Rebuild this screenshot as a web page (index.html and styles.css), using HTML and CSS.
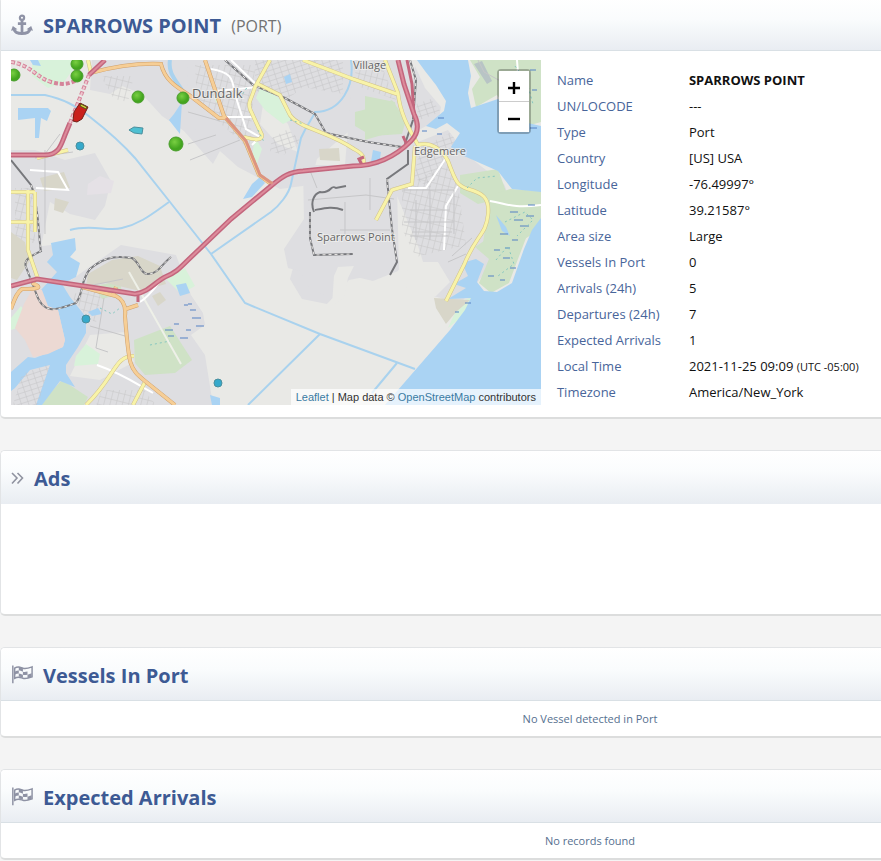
FILE: index.html
```
<!DOCTYPE html>
<html lang="en">
<head>
<meta charset="utf-8">
<title>Sparrows Point</title>
<link rel="stylesheet" href="styles.css">
</head>
<body>
<main class="page">
  <section class="card">
    <header class="card-head card-head-line">
      <svg class="icon" viewBox="0 0 24 24" fill="none" stroke="#8f93a6" stroke-width="3" aria-hidden="true">
        <circle cx="12" cy="3" r="2.300" stroke-width="2.400"/>
        <path d="M12 5V20M7.500 9.500h9M3 15c1 3.500 4.500 5.300 9 5.300s8-1.800 9-5.300"/>
        <path d="M0 17.300 2 12l5 3.500zM24 17.300 22 12l-5 3.500z" fill="#8f93a6" stroke="none"/>
      </svg>
      <h1>SPARROWS POINT</h1><span class="kind">(PORT)</span>
    </header>
    <div class="port">
      <div class="map">
        <svg class="map-art" viewBox="11 60 530 345" preserveAspectRatio="xMidYMid slice" role="img" aria-label="Map of Sparrows Point">
          <defs>
            <pattern id="grid" width="7" height="5" patternUnits="userSpaceOnUse" patternTransform="rotate(-18)"><path d="M0 0H7M0 0V5" stroke="#c3c3c6" stroke-width="1" fill="none"/></pattern>
            <pattern id="grid2" width="6" height="8" patternUnits="userSpaceOnUse" patternTransform="rotate(14)"><path d="M0 0H6M0 0V8" stroke="#c6c5c6" stroke-width="1" fill="none"/></pattern>
            <radialGradient id="ball" cx=".4" cy=".35"><stop offset="0" stop-color="#79cf42"/><stop offset="1" stop-color="#43a51f"/></radialGradient>
          </defs>
          <path fill="#e9e9e6" d="M11 60h530v345H11z"/>
          <g fill="#dedee1">
            <path d="M92 60h105l30 78-14 26-29-33-22-15-20-22-20-8-12 8-20-4z"/>
            <path d="M188 60h172l8 16-6 45-20 16-25 22-7 26-30 4-42-22-52-46z"/>
            <path d="M354 60h55l8 90-20 35 2 85-50 10-22 24-25-5-12-20 14-50 8-44 18-12 15-8z"/>
            <path d="M303 165h92l3 106-25 10-25-6-24 20-16-9-8-15-12-3-4-19 20-30z"/>
            <path d="M11 150h24l30 10 30-7 16 28-6 25-10 14-25-6-20-12-14 70-25 14z"/>
            <path d="M11 250l40-5 20 35 50-35 55 10 15 40 12 18 2 12-14 10 14 20 8 50H11z"/>
            <path d="M398 150l50-20 20 26 36 28 12 30-32 60-24 30-26-8-16-50-21-50z"/>
            <path d="M415 66l10 22 16 19-2 12-22 12-10-12z"/>
          </g>
          <g fill="#e9e9e6">
            <path d="M334 276l4-9 16-1-6 12-4 20-12 8zM264 98l24 26 10 28-20-8-18-20zM408 262l30 0 12 20-14 14-30 0zM90 335l36-3 8 30-34 18-30-4z"/>
          </g>
          <g fill="url(#grid2)">
            <path d="M100 76h34l-6 26-14-3-8-14z"/>
            <path d="M195 65h60l-5 85-28-25-25-23z"/>
            <path d="M352 62h28l16 38-36-13z"/>
            <path d="M402 188l46-25 10 22 8 60-50 12-14-28z"/>
            <path d="M15 188h20v55H15z"/>
            <path d="M70 294l32-4-6 33-12-10z"/>
            <path d="M102 390h42l12 15h-60z"/>
          </g>
          <g fill="url(#grid)">
            <path d="M255 60h88v34l-40-7-20 16-28-12z"/>
            <path d="M272 138l16-9 13 12-17 14-14-4z"/>
            <path d="M416 104l15-5 10 13-22 8z"/>
            <path d="M420 148l30-15 8 9-12 18-16 28-16-10z"/>
          </g>
          <g fill="#cfe2c6">
            <path d="M355 112l20-5 17-7 14 20-4 14-30 2-17-10z"/>
            <path d="M365 96l30 6 4 28-34 10z"/>
            <path d="M480 60h61v62l-18 5-26-32-21 12-4-18 8-12-10-17z"/>
            <path d="M134 340l36-14 22 34-17 13-30 2-10-12z"/>
            <path d="M44 400l18-20 26 17-4 8H42z"/>
            <path d="M460 175l38-6 10 28-30 7-18-11z"/>
            <path d="M490 196l20-7 31 2v28l-10 16-28 18-20-10z"/>
            <path d="M496 233h32l-10 26-9 24-18 10-12-10 10-24-14-12z"/>
            <path d="M94 286l26-5 2 12-20 6z"/>
          </g>
          <g fill="#d8f2da">
            <path d="M32 60h48l-16 22-16 6-16-12z"/>
            <path d="M261 86l18 12 12 22-8 4-18-14-9-12z"/>
            <path d="M76 356l10-12 14 10-2 10-24 2z"/>
            <path d="M11 318l10-12 4 6-8 16-6 2z"/>
            <path d="M255 137l7 12-5 15-6-2zM213 91l9 6-6 6z"/>
            <path d="M165 278l20-10 10 18-14 8z"/>
            <path d="M448 328l12-26 12-5-8 18z"/>
          </g>
          <g fill="#d8d6c9">
            <path d="M40 178l24-6 6 16-26 3zM55 198l14 4-6 11-9-3z"/>
            <path d="M88 274l24-14 26-4 22 10 6 18-26 7-34-8-20 3z"/>
            <path d="M319 149l20-1 1 13-20-1zM11 232l14 10 4 20-12 18-6-2z"/>
            <path d="M434 298l36 2-14 12-10 12-10-16z"/>
            <path d="M152 296l8-4 6 8-8 6z"/>
          </g>
          <path fill="#e5e1e6" d="M88 184l12-8 14 5-3 12-24 2z"/>
          <!-- Water -->
          <g fill="#aad3f3">
            <path d="M417 60h51l3 16-3 17 3 15 27-9 30 24 13 3v66l-29-3-14-18-34-15-13-9 9-14-13-10-11 6-10-3 18-15 2-10-10-16-11-14z"/>
            <path d="M541 218v187H385l65-75 15-20 6-12-23 1 18-11-12-4 14-8-6-13 14-4 8 5-7 18 7 9 13 1 15-9 12-34 8-19z"/>
            <path d="M51 243L75 238 76 250 70 257 80 263 76 277 62 284 70 297 86 317 86 333 78 347 66 365 66 373 75 387 60 381 42 405H36L50 365 30 370 15 388 11 391V372L28 357 35 358 63 347 65 340 58 310 48 310 41 290 50 280 57 272 47 262 53 255z"/>
            <path d="M18 108h30l3 3-4 10-6-3-2 20h-4v-20l-17 2z"/>
            <path d="M252 184l8-7 5 6-13 14-9 2zM174 114l8-12-2 32-11-14zM210 395l10 3v7h-8zM176 285l10-2 4 10-10 3z"/>
            <path d="M284 77l6-3 2 8-6 2zM373 150l8 2-2 13-8-3zM30 60h8l3 6-8-1z"/>
            <path d="M496 215l10 12 4 9-8-5zM88 312l10-4 4 6-10 2z"/>
          </g>
          <path fill="#ecd9d3" d="M15 328L24 304 34 286 42 290 48 306 58 310 65 340 63 347 48 354 33 357 25 340z"/>
          <path fill="url(#grid)" d="M22 374l28-10-12 41H13z"/>
          <path fill="#b8c4c5" d="M474 64l8-3 10 20-5 3z"/>
          <g fill="none" stroke="#a9d2ee" stroke-width="2">
            <path d="M11 95h34c18 4 30 10 45 22 18 14 30 24 45 41l35 44 41 52 34 49 75 31 95 35"/>
            <path d="M70 230c22-6 38 2 52-2 18-4 30-14 47-26M211 254l60-42c8-6 18-18 20-28l10-46c6-14 12-20 14-26 26 0 40-26 36-52M320 334l-72 71M397 363l-25 30"/>
            <path d="M170 60c-2 12 4 18 12 30" stroke-width="4"/>
          </g>
          <!-- Minor streets -->
          <g fill="none" stroke="#fff" stroke-width="2">
            <path d="M211 69c18 3 22 8 23 22l12 38 14 8-8 8M231 60l28 27-43 4M226 117h29M30 170l28 2 10 18-32-2M408 188h18l20-30M458 186l-12 20-2 44M490 201c16 2 20 8 51 4M517 60l2 25"/>
            <path d="M129 272l52 92" stroke="#eef0e8"/>
            <path d="M97 365c26 9 38 18 56 28M140 302c10-6 16-16 24-26"/>
          </g>
          <g fill="none" stroke="#c6c6c8" stroke-width="1">
            <path d="M188 112l32 9M188 144l28-9M190 160l50-20M60 134l-18 24M45 150v84M35 158l24-4 14-2M309 168l8 20M308 200l58-5 28 4M104 298l-8 50 12 4M88 286l35-7M90 326l35 10M340 230h50M345 202v34M370 178v32M310 170l30-2M478 60l6 12 22 12"/>
            <path d="M410 210h40M404 222h50M410 236h38M402 190h52M416 200v40M430 190v50M454 190v44M412 232h40M452 256l20-18M448 262l18-8"/>
          </g>
          <!-- Rail -->
          <g fill="none" stroke="#77787c" stroke-width="2">
            <path d="M225 60l28 25 32 13 30 16 11 19 42 9 34 5M410 60l6 20-3 40-8 24M408 150v14l-21 15 5 50 5 33-7 13"/>
            <path d="M314 212c-4-10 0-18 6-20 12 2 10-8 16-4l10-2M315 210c10-2 18-4 28 0M310 232v-20M310 216v22l4 17 39-1"/>
            <path d="M11 160l20 25c8 18 8 60 10 66-8 4-18 8-15 16l10 26c8 24 22 16 40 10 8-10 4-22 14-34 18-16 34-12 42-11 8 4 8 16 16 16 10 0 14-10 23-17"/>
          </g>
          <g fill="none" stroke="#ebe9e6" stroke-width="1" stroke-dasharray="3 3">
            <path d="M225 60l28 25 32 13 30 16 11 19 42 9 34 5M410 60l6 20-3 40M387 179l5 50 5 33M310 216v22l4 17 39-1M31 185c8 18 8 60 10 66-8 4-18 8-15 16l10 26c8 24 22 16 40 10 8-10 4-22 14-34 18-16 34-12 42-11 8 4 8 16 16 16 10 0 14-10 23-17"/>
          </g>
          <!-- Yellow and orange roads, casing first -->
          <g fill="none">
            <path stroke="#d0c18b" stroke-width="4" d="M270 60l-15 27c-4 14-7 14-5 22l12 26c0 7-10 4-18 2M256 83l24 12 10 20c10 14 38 16 64 34 10 5 10 8 10 18M303 60l50 19 44 15M385 60l13 33c2 20 10 34 20 52 12-4 24 4 30 16 8 22 10 25 20 28 14 4 22 8 20 26-2 20-12 20-24 50l-8 16-10 20M415 146l-3 38-20 6-16 30M37 158l31-8M35 192h-24M35 192v40M28 190v60l10 29M11 222h22M88 60l3 13M134 356c-20 0-18 20-48 49M145 382l-12 23"/>
            <path stroke="#f8f3a8" stroke-width="3" d="M270 60l-15 27c-4 14-7 14-5 22l12 26c0 7-10 4-18 2M256 83l24 12 10 20c10 14 38 16 64 34 10 5 10 8 10 18M303 60l50 19 44 15M385 60l13 33c2 20 10 34 20 52 12-4 24 4 30 16 8 22 10 25 20 28 14 4 22 8 20 26-2 20-12 20-24 50l-8 16-10 20M415 146l-3 38-20 6-16 30M37 158l31-8M35 192h-24M35 192v40M28 190v60l10 29M11 222h22M88 60l3 13M134 356c-20 0-18 20-48 49M145 382l-12 23"/>
            <path stroke="#cfa06b" stroke-width="4" d="M90 73c30-8 50-10 71-9 4 16 14 22 28 31l30 23 6 0M205 60l19 56 21 25 14 34 12 9M32 283c12 5 6 6-10 6-6 4-8 12-11 20M82 287l34 9c8 4 10 12 9 20 4 50 4 52 20 65l30 24M126 309l12-4M113 296l3-9"/>
            <path stroke="#f6ce96" stroke-width="3" d="M90 73c30-8 50-10 71-9 4 16 14 22 28 31l30 23 6 0M205 60l19 56 21 25 14 34 12 9M32 283c12 5 6 6-10 6-6 4-8 12-11 20M82 287l34 9c8 4 10 12 9 20 4 50 4 52 20 65l30 24M126 309l12-4M113 296l3-9"/>
          </g>
          <!-- Motorways -->
          <g fill="none" stroke="#c3667d" stroke-width="5">
            <path d="M11 155h34c14 0 16-10 20-20l5-12M89 75l16-15M11 286l26-7 60 9 38 6c14-2 20-12 30-17 10-4 14-8 22-16l44-42 40-33c12-10 18-14 32-15l50-5C382 166 400 152 411 141 420 132 418 122 414 114L404 84 398 60"/>
            <path d="M407 60l5 24 2 30M362 165l-3-6 5-2M407 145l-4-9M138 294v8" stroke-width="3"/>
            <path d="M226 118l20 23 14 34 13 9" stroke="#dc9480" stroke-width="3"/>
          </g>
          <path fill="none" stroke="#dd8b9b" stroke-width="2" d="M11 155h34c14 0 16-10 20-20l5-12M89 75l16-15M11 286l26-7 60 9 38 6c14-2 20-12 30-17 10-4 14-8 22-16l44-42 40-33c12-10 18-14 32-15l50-5C382 166 400 152 411 141 420 132 418 122 414 114L404 84 398 60"/>
          <path fill="none" stroke="#d5849a" stroke-width="4" stroke-dasharray="4 2" d="M11 62c20 3 26 16 40 20 14 4 20 1 28-3M70 123l19-48"/>
          <path fill="none" stroke="#efc7cf" stroke-width="2" stroke-dasharray="3 3" d="M70 123l19-48M11 62c20 3 26 16 40 20"/>
          <g stroke="#5581c4" stroke-width="1">
            <path d="M188 304h4M190 310h6M192 318h9M196 326h8M184 305h4M165 330h8M168 336h6M180 338h8M174 324h5M186 330h5M438 118h6M422 131h5M437 134h5M510 212h8M514 220h9M526 216h8M520 226h9M528 205h7M500 234h8M494 250h6M503 258h7M510 268h6M488 276h6M500 280h5M530 70h6M532 90h5M530 128h7M522 100h5M512 240h6M505 248h5M465 303h6M455 312h4"/>
          </g>
          <g fill="none" stroke="#85c7c0" stroke-width="1" stroke-dasharray="2 3">
            <path d="M496 260l12-14 6 18-16 12M505 222l20-10 8 8-16 16M515 66l12 16 6 22M467 188l10-10 20-2M240 98l8-12M258 130l6 12M290 120l14 4M150 345l20-4M100 308l12 6 8-6"/>
          </g>
          <g class="map-place">
            <text x="192" y="98" class="place-town">Dundalk</text>
            <text x="353" y="69">Village</text>
            <text x="414" y="155">Edgemere</text>
            <text x="317" y="241">Sparrows Point</text>
          </g>
          <g fill="url(#ball)" stroke="#4a9e2c" stroke-width="1">
            <circle cx="14" cy="75" r="6"/><circle cx="77" cy="64" r="6"/><circle cx="77" cy="76" r="6"/><circle cx="138" cy="97" r="6"/><circle cx="183" cy="98" r="6"/><circle cx="176" cy="144" r="7"/>
          </g>
          <g fill="#36a9cb" stroke="#4b8f9d" stroke-width="1">
            <circle cx="80" cy="146" r="4"/><circle cx="86" cy="319" r="4"/><circle cx="218" cy="383" r="4"/>
            <path d="M129 130l5-3 9 1-1 6-8-1z" fill="#4fc0d2"/>
          </g>
          <path d="M80 103l8 4-6 12-5 3-4-1 1-9z" fill="#c9211d" stroke="#702019"/>
          <path d="M81 104l6 3-1 2-6-3z" fill="#d6d63c" stroke="#56541c"/>
        </svg>
        <div class="zoom">
          <button type="button" aria-label="Zoom in"><svg viewBox="0 0 14 14" aria-hidden="true"><path d="M7 1v12M1 7h12"/></svg></button>
          <button type="button" aria-label="Zoom out"><svg viewBox="0 0 14 14" aria-hidden="true"><path d="M1 7h12"/></svg></button>
        </div>
        <div class="credit"><a href="#">Leaflet</a> | Map data © <a href="#">OpenStreetMap</a> contributors</div>
      </div>
      <table class="facts">
        <tbody>
          <tr><th scope="row">Name</th><td><strong>SPARROWS POINT</strong></td></tr>
          <tr><th scope="row">UN/LOCODE</th><td>---</td></tr>
          <tr><th scope="row">Type</th><td>Port</td></tr>
          <tr><th scope="row">Country</th><td>[US] USA</td></tr>
          <tr><th scope="row">Longitude</th><td>-76.49997°</td></tr>
          <tr><th scope="row">Latitude</th><td>39.21587°</td></tr>
          <tr><th scope="row">Area size</th><td>Large</td></tr>
          <tr><th scope="row">Vessels In Port</th><td>0</td></tr>
          <tr><th scope="row">Arrivals (24h)</th><td>5</td></tr>
          <tr><th scope="row">Departures (24h)</th><td>7</td></tr>
          <tr><th scope="row">Expected Arrivals</th><td>1</td></tr>
          <tr><th scope="row">Local Time</th><td>2021-11-25 09:09 <small>(UTC -05:00)</small></td></tr>
          <tr><th scope="row">Timezone</th><td>America/New_York</td></tr>
        </tbody>
      </table>
    </div>
  </section>

  <section class="card">
    <header class="card-head">
      <svg class="icon-small" viewBox="0 0 13 14" fill="none" stroke="#9093a0" stroke-width="1.600" aria-hidden="true"><path d="M1 1 6 6l-5 5.500M6.500 1l5 5-5 5.500"/></svg>
      <h2>Ads</h2>
    </header>
    <div class="ad-space"></div>
  </section>

  <section class="card">
    <header class="card-head card-head-line">
      <svg class="icon" viewBox="0 0 24 24" aria-hidden="true"><use href="#flag"/></svg>
      <h2>Vessels In Port</h2>
    </header>
    <p class="empty">No Vessel detected in Port</p>
  </section>

  <section class="card">
    <header class="card-head card-head-line">
      <svg class="icon" viewBox="0 0 24 24" aria-hidden="true">
        <g id="flag" fill="none" stroke="#8e92a4">
          <path stroke-width="1.600" d="M2 .5V20"/>
          <path stroke-width="1.600" d="M4 3.500c4-3 6-1 9 0s6 0 10-1.500v11c-4 1.500-7 2.500-10 1.500S8 12 4 14.500z"/>
          <path fill="#8e92a4" stroke="none" d="M8.500 2c2 0 3 1 4.500 1.500v3.800c-1.500-.5-2.500-1.300-4.500-1.300zM4 7.300c1.500-.9 3-1.300 4.500-1.300v3.300c-1.500 0-3 .5-4.500 1.400zM13 7.300c1.500.5 3 .3 5-.2v3.400c-2 .5-3.500.7-5 .2zM8.500 9.300c2 0 3 1 4.500 1.400V14c-1.500-.5-2.500-1.300-4.500-1.300zM18 10.500c1.500-.4 3-.9 4.500-1.500v4c-1.500.6-3 1.100-4.500 1.500z"/>
        </g>
      </svg>
      <h2>Expected Arrivals</h2>
    </header>
    <p class="empty">No records found</p>
  </section>
</main>
</body>
</html>
```
FILE: styles.css
```
* { box-sizing: border-box; }

body {
  margin: 0;
  background: #f4f4f4;
  font: 13px/18px "Open Sans", "Noto Sans", sans-serif;
  color: #111;
}

.page {
  display: flex;
  flex-direction: column;
  gap: 31px;
  margin-top: -3px;
}

/* Panels are flush with the right edge of the window */
.card {
  background: #fff;
  border: 1px solid #e2e4e6;
  border-right: 0;
  border-bottom: 2px solid #dcdddd;
  border-radius: 5px 0 0 5px;
  overflow: hidden;
}

.card-head {
  display: flex;
  align-items: center;
  height: 53px;
  padding: 4px 10px 0;
  background: linear-gradient(#fff, #fafcfd 40%, #e9edf2);
  border-bottom: 1px solid #e9edf2;
}

.card-head-line { border-bottom-color: #d9e0e5; }

h1, h2 {
  margin: 0;
  font-size: 20px;
  line-height: 28px;
  font-weight: 700;
  color: #3d5a94;
}

.icon { width: 22px; height: 24px; margin-right: 10px; }
.icon-small { width: 13px; height: 14px; margin-right: 10px; }

.kind {
  margin-left: 10px;
  font-size: 16px;
  color: #737373;
}

.port {
  display: grid;
  grid-template-columns: 27fr 16fr;
  column-gap: 16px;
  padding: 9px 10px 12px;
}

.map {
  position: relative;
  height: 345px;
  overflow: hidden;
}

.map-art { display: block; width: 100%; height: 100%; }

.map-place text {
  font-size: 11px;
  fill: #666;
  stroke: #f2f2f0;
  stroke-opacity: .7;
  stroke-width: 2px;
  paint-order: stroke;
}

.map-place .place-town { font-size: 13px; }

.zoom {
  position: absolute;
  top: 9px;
  right: 10px;
  display: flex;
  flex-direction: column;
  border: 2px solid rgba(0, 0, 0, .25);
  border-radius: 4px;
}

.zoom button {
  width: 30px;
  height: 30px;
  padding: 10px 8px 6px;
  border: 0;
  background: #fff;
}

.zoom button:first-child { height: 31px; border-bottom: 1px solid #ccc; }
.zoom svg { display: block; width: 14px; height: 14px; stroke: #000; stroke-width: 2.4; }

.credit {
  position: absolute;
  right: 0;
  bottom: 0;
  padding: 0 5px;
  background: rgba(255, 255, 255, .7);
  font: 11px/16px "Liberation Sans", sans-serif;
  color: #333;
}

.credit a { color: #3a7ba3; text-decoration: none; }

.facts {
  align-self: start;
  justify-self: start;
  margin-top: 7px;
  border-collapse: collapse;
}

.facts th, .facts td {
  height: 26px;
  padding: 0;
  text-align: left;
  font-weight: 400;
  white-space: nowrap;
}

.facts th { width: 132px; color: #48659a; }
.facts td { color: #111; }
.facts small { font-size: 11px; }

.ad-space { height: 110px; }

.empty {
  margin: 0;
  padding: 9px 0 8px 298px;
  text-align: center;
  font-size: 11px;
  line-height: 18px;
  color: #56708f;
}
```
